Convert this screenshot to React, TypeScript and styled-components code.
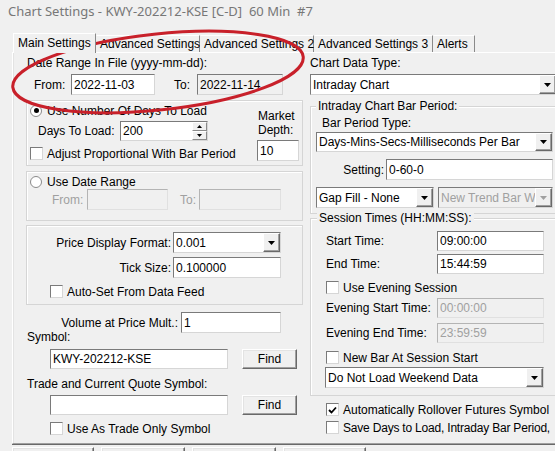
import React from "react";
import styled, { createGlobalStyle } from "styled-components";

const FACE = "#f0f0f0";
const DISABLED_TEXT = "#a0a0a0";

const GlobalStyle = createGlobalStyle`
  html, body { margin: 0; padding: 0; background: ${FACE}; }
  body {
    font-family: "Liberation Sans", Arial, sans-serif;
    font-size: 12px;
    color: #000;
  }
  *, *::before, *::after { box-sizing: border-box; }
`;

const Window = styled.div`
  position: relative;
  width: 555px;
  height: 451px;
  overflow: hidden;
  background: ${FACE};
`;

const TitleBar = styled.div`
  height: 22px;
  padding-left: 8px;
  font-family: "Noto Sans", "Open Sans", sans-serif;
  font-size: 13px;
  line-height: 22px;
  color: #777;
  white-space: pre;
`;

const Body = styled.div`
  padding: 11px 0 0 12px;
`;

const TabStrip = styled.div`
  display: flex;
  align-items: flex-end;
  height: 19px;
  padding-left: 1px;
`;

const Tab = styled.div<{ $w: number; $active?: boolean }>`
  position: relative;
  z-index: ${(p) => (p.$active ? 1 : 0)};
  flex: none;
  width: ${(p) => p.$w}px;
  height: ${(p) => (p.$active ? 20 : 17)}px;
  margin-bottom: ${(p) => (p.$active ? -1 : 0)}px;
  padding: ${(p) => (p.$active ? "2px 0 0 4px" : "1px 0 0 3px")};
  border-left: 1px solid ${(p) => (p.$active ? "#fff" : "transparent")};
  border-top: 1px solid #fff;
  border-right: 1px solid #8a8a8a;
  background: ${FACE};
  line-height: 14px;
  white-space: nowrap;
`;

const Panel = styled.div`
  width: 560px;
  height: 392px;
  border-top: 1px solid #fff;
  border-left: 1px solid #fff;
  border-bottom: 1px solid #a0a0a0;
  box-shadow: 0 1px 0 #696969, inset 1px 0 0 #e3e3e3;
  display: grid;
  grid-template-columns: 277px 250px;
  column-gap: 7px;
  align-items: start;
  padding-left: 13px;
`;

const Stack = styled.div<{ $w?: number; $mt?: number; $mr?: number; $pt?: number; $pl?: number }>`
  display: flex;
  flex-direction: column;
  flex: ${(p) => (p.$w ? "none" : "1")};
  ${(p) => (p.$w ? `width: ${p.$w}px;` : "")}
  margin-top: ${(p) => p.$mt ?? 0}px;
  margin-right: ${(p) => p.$mr ?? 0}px;
  padding-top: ${(p) => p.$pt ?? 0}px;
  padding-left: ${(p) => p.$pl ?? 0}px;
`;

const Caption = styled.div<{ $mt?: number; $pl?: number; $disabled?: boolean }>`
  height: 14px;
  margin-top: ${(p) => p.$mt ?? 0}px;
  padding-left: ${(p) => p.$pl ?? 0}px;
  line-height: 14px;
  white-space: nowrap;
  color: ${(p) => (p.$disabled ? DISABLED_TEXT : "inherit")};
`;

const Row = styled.div<{ $h: number; $mt?: number; $pl?: number }>`
  display: flex;
  align-items: center;
  height: ${(p) => p.$h}px;
  margin-top: ${(p) => p.$mt ?? 0}px;
  padding-left: ${(p) => p.$pl ?? 0}px;
  white-space: nowrap;
`;

const Label = styled.span<{
  $w?: number;
  $ml?: number;
  $pr?: number;
  $right?: boolean;
  $disabled?: boolean;
  $tight?: boolean;
}>`
  flex: none;
  ${(p) => (p.$w != null ? `width: ${p.$w}px;` : "")}
  margin-left: ${(p) => p.$ml ?? 0}px;
  padding-right: ${(p) => p.$pr ?? 0}px;
  text-align: ${(p) => (p.$right ? "right" : "left")};
  letter-spacing: ${(p) => (p.$tight ? "-0.2px" : "normal")};
  line-height: 14px;
  white-space: nowrap;
  color: ${(p) => (p.$disabled ? DISABLED_TEXT : "inherit")};
`;

/* sunken edit field */
const TextBox = styled.input.attrs({ type: "text", readOnly: true })<{
  $w: number;
  $h?: number;
  $ml?: number;
  $mt?: number;
  $disabled?: boolean;
  $gray?: boolean;
}>`
  flex: none;
  width: ${(p) => p.$w}px;
  height: ${(p) => (p.$h ? `${p.$h}px` : "100%")};
  margin: ${(p) => p.$mt ?? 0}px 0 0 ${(p) => p.$ml ?? 0}px;
  padding: 0 0 0 2px;
  border: 1px solid;
  border-color: ${(p) => (p.$disabled ? "#b4b4b4 #e0e0e0 #e0e0e0 #b4b4b4" : "#7a7a7a #d6d6d6 #d6d6d6 #7a7a7a")};
  background: ${(p) => (p.$disabled || p.$gray ? FACE : "#fff")};
  color: ${(p) => (p.$disabled ? DISABLED_TEXT : "#000")};
  font: inherit;
  outline: none;
`;

const Combo = styled.div<{ $w: number; $ml?: number; $disabled?: boolean }>`
  flex: none;
  display: flex;
  width: ${(p) => p.$w}px;
  height: 100%;
  margin-left: ${(p) => p.$ml ?? 0}px;
  border: 1px solid;
  border-color: #7a7a7a #d6d6d6 #d6d6d6 #7a7a7a;
  background: ${(p) => (p.$disabled ? FACE : "#fff")};
  color: ${(p) => (p.$disabled ? DISABLED_TEXT : "#000")};
`;

const ComboValue = styled.span`
  flex: 1;
  min-width: 0;
  display: flex;
  align-items: center;
  padding-left: 2px;
  overflow: hidden;
  white-space: nowrap;
`;

const DropButton = styled.span`
  flex: none;
  width: 17px;
  display: flex;
  align-items: center;
  justify-content: center;
  background: ${FACE};
  border: 1px solid;
  border-color: #fff #696969 #696969 #fff;
  box-shadow: inset -1px -1px 0 #a0a0a0;
`;

const SpinBox = styled.div<{ $w: number }>`
  flex: none;
  display: flex;
  width: ${(p) => p.$w}px;
  height: 100%;
  border: 1px solid;
  border-color: #7a7a7a #d6d6d6 #d6d6d6 #7a7a7a;
  background: #fff;
`;

const SpinButtons = styled.span`
  flex: none;
  width: 15px;
  display: flex;
  flex-direction: column;
`;

const SpinButton = styled.span`
  flex: 1;
  display: flex;
  align-items: center;
  justify-content: center;
  background: ${FACE};
  border: 1px solid;
  border-color: #fff #8a8a8a #8a8a8a #fff;
`;

const PushButton = styled.button<{ $w: number; $h: number; $ml?: number }>`
  flex: none;
  width: ${(p) => p.$w}px;
  height: ${(p) => p.$h}px;
  margin: 0 0 0 ${(p) => p.$ml ?? 0}px;
  padding: 0;
  border: 1px solid;
  border-color: #fff #696969 #696969 #fff;
  box-shadow: inset -1px -1px 0 #a0a0a0, inset 1px 1px 0 #e3e3e3;
  background: ${FACE};
  color: #000;
  font: inherit;
  line-height: 14px;
`;

const Check = styled.span<{ $checked?: boolean }>`
  flex: none;
  width: 13px;
  height: 13px;
  margin-right: 4px;
  display: inline-flex;
  align-items: center;
  justify-content: center;
  border: 1px solid;
  border-color: #7a7a7a #d6d6d6 #d6d6d6 #7a7a7a;
  background: #fff;
`;

const Radio = styled.span<{ $checked?: boolean }>`
  flex: none;
  width: 12px;
  height: 12px;
  margin-right: 5px;
  display: inline-flex;
  align-items: center;
  justify-content: center;
  border-radius: 50%;
  border: 1px solid #8a8a8a;
  background: #fff;
  &::after {
    content: "";
    display: ${(p) => (p.$checked ? "block" : "none")};
    width: 5px;
    height: 5px;
    border-radius: 50%;
    background: #000;
  }
`;

/* etched frame without caption */
const Group = styled.div<{ $h: number; $mt?: number; $row?: boolean; $pt?: number; $pl?: number }>`
  display: flex;
  flex-direction: ${(p) => (p.$row ? "row" : "column")};
  height: ${(p) => p.$h}px;
  margin-top: ${(p) => p.$mt ?? 0}px;
  padding-top: ${(p) => p.$pt ?? 0}px;
  padding-left: ${(p) => p.$pl ?? 0}px;
  border: 1px solid #d5d5d5;
  box-shadow: inset 1px 1px 0 #fff;
`;

/* etched frame with caption sitting on its top edge */
const TitledGroup = styled.div<{ $h: number; $mt?: number }>`
  display: flex;
  flex-direction: column;
  width: 252px;
  height: ${(p) => p.$h}px;
  margin-top: ${(p) => p.$mt ?? 0}px;
  border: 1px solid #d5d5d5;
  box-shadow: inset 1px 1px 0 #fff;
`;

const GroupTitle = styled.div<{ $ml: number }>`
  align-self: flex-start;
  height: 14px;
  margin: -8px 0 0 ${(p) => p.$ml}px;
  padding: 0 2px;
  background: ${FACE};
  line-height: 14px;
  white-space: nowrap;
`;

const ButtonBar = styled.div`
  display: flex;
  gap: 7px;
  margin-top: 3px;
`;

const Annotation = styled.svg`
  position: absolute;
  left: 0;
  top: 0;
  width: 555px;
  height: 451px;
  pointer-events: none;
`;

const DownArrow = ({ color = "#000" }: { color?: string }) => (
  <svg width="7" height="4" viewBox="0 0 7 4">
    <path d="M0 0H7L3.5 4Z" fill={color} />
  </svg>
);

const SmallArrow = ({ up }: { up?: boolean }) => (
  <svg width="5" height="3" viewBox="0 0 5 3">
    <path d={up ? "M0 3H5L2.5 0Z" : "M0 0H5L2.5 3Z"} fill="#000" />
  </svg>
);

const CheckMark = () => (
  <svg width="9" height="8" viewBox="0 0 9 8">
    <path d="M1 4L3.5 6.5L8 1.5" stroke="#000" strokeWidth="1.8" fill="none" />
  </svg>
);

const DropDown = ({ w, ml, value, disabled }: { w: number; ml?: number; value: string; disabled?: boolean }) => (
  <Combo $w={w} $ml={ml} $disabled={disabled}>
    <ComboValue>{value}</ComboValue>
    <DropButton>
      <DownArrow color={disabled ? DISABLED_TEXT : "#000"} />
    </DropButton>
  </Combo>
);

const CheckRow = ({
  mt,
  pl,
  checked,
  tight,
  children,
}: {
  mt?: number;
  pl?: number;
  checked?: boolean;
  tight?: boolean;
  children: React.ReactNode;
}) => (
  <Row $h={15} $mt={mt} $pl={pl}>
    <Check $checked={checked}>{checked && <CheckMark />}</Check>
    <Label $tight={tight}>{children}</Label>
  </Row>
);

const tabs = [
  { label: "Main Settings", w: 83, active: true },
  { label: "Advanced Settings", w: 104 },
  { label: "Advanced Settings 2", w: 114 },
  { label: "Advanced Settings 3", w: 119 },
  { label: "Alerts", w: 42 },
];

export default function App() {
  return (
    <Window>
      <GlobalStyle />
      <TitleBar>{"Chart Settings - KWY-202212-KSE [C-D]  60 Min  #7"}</TitleBar>
      <Body>
        <TabStrip>
          {tabs.map((t) => (
            <Tab key={t.label} $w={t.w} $active={t.active}>
              {t.label}
            </Tab>
          ))}
        </TabStrip>
        <Panel>
          {/* left column */}
          <Stack>
            <Caption $mt={3} $pl={1}>Date Range In File (yyyy-mm-dd):</Caption>
            <Row $h={21} $mt={4} $pl={8}>
              <Label $w={37}>From:</Label>
              <TextBox $w={84} value="2022-11-03" />
              <Label $w={23} $ml={19}>To:</Label>
              <TextBox $w={86} $gray value="2022-11-14" />
            </Row>

            <Group $h={66} $mt={5} $row>
              <Stack $pt={2} $pl={3}>
                <Row $h={15}>
                  <Radio $checked />
                  <Label>Use Number Of Days To Load</Label>
                </Row>
                <Row $h={20} $mt={3} $pl={8}>
                  <Label $w={82}>Days To Load:</Label>
                  <SpinBox $w={88}>
                    <ComboValue>200</ComboValue>
                    <SpinButtons>
                      <SpinButton>
                        <SmallArrow up />
                      </SpinButton>
                      <SpinButton>
                        <SmallArrow />
                      </SpinButton>
                    </SpinButtons>
                  </SpinBox>
                </Row>
                <CheckRow mt={5}>Adjust Proportional With Bar Period</CheckRow>
              </Stack>
              <Stack $w={42} $mr={3} $pt={8}>
                <Caption $pl={1}>Market</Caption>
                <Caption $pl={1}>Depth:</Caption>
                <TextBox $w={42} $h={21} $mt={3} value="10" />
              </Stack>
            </Group>

            <Group $h={50} $mt={5} $pt={2} $pl={3}>
              <Row $h={15}>
                <Radio />
                <Label>Use Date Range</Label>
              </Row>
              <Row $h={21} $pl={22}>
                <Label $w={35} $disabled>From:</Label>
                <TextBox $w={81} $disabled value="" />
                <Label $w={19} $ml={12} $disabled>To:</Label>
                <TextBox $w={82} $disabled value="" />
              </Row>
            </Group>

            <Group $h={80} $mt={4} $pt={6}>
              <Row $h={21}>
                <Label $w={146} $pr={2} $right>Price Display Format:</Label>
                <DropDown w={108} value="0.001" />
              </Row>
              <Row $h={21} $mt={4}>
                <Label $w={146} $pr={2} $right>Tick Size:</Label>
                <TextBox $w={108} value="0.100000" />
              </Row>
              <CheckRow mt={6} pl={23}>Auto-Set From Data Feed</CheckRow>
            </Group>

            <Row $h={21} $mt={7}>
              <Label $w={155} $pr={3} $right>Volume at Price Mult.:</Label>
              <TextBox $w={100} value="1" />
            </Row>
            <Caption $mt={-3} $pl={1}>Symbol:</Caption>
            <Row $h={20} $mt={5} $pl={24}>
              <TextBox $w={178} value="KWY-202212-KSE" />
              <PushButton $w={55} $h={20} $ml={14}>Find</PushButton>
            </Row>
            <Caption $mt={8} $pl={1}>Trade and Current Quote Symbol:</Caption>
            <Row $h={20} $mt={4} $pl={24}>
              <TextBox $w={178} value="" />
              <PushButton $w={55} $h={20} $ml={14}>Find</PushButton>
            </Row>
            <CheckRow mt={6} pl={24}>Use As Trade Only Symbol</CheckRow>
          </Stack>

          {/* right column */}
          <Stack>
            <Caption $mt={3}>Chart Data Type:</Caption>
            <Row $h={21} $mt={4}>
              <DropDown w={247} value="Intraday Chart" />
            </Row>

            <TitledGroup $h={108} $mt={11}>
              <GroupTitle $ml={5}>Intraday Chart Bar Period:</GroupTitle>
              <Caption $mt={3} $pl={11}>Bar Period Type:</Caption>
              <Row $h={20} $mt={2} $pl={5}>
                <DropDown w={237} value="Days-Mins-Secs-Milliseconds Per Bar" />
              </Row>
              <Row $h={21} $mt={7}>
                <Label $w={75} $pr={2} $right>Setting:</Label>
                <TextBox $w={167} value="0-60-0" />
              </Row>
              <Row $h={21} $mt={7} $pl={5}>
                <DropDown w={118} value="Gap Fill - None" />
                <DropDown w={115} ml={4} value="New Trend Bar W" disabled />
              </Row>
            </TitledGroup>

            <TitledGroup $h={178} $mt={4}>
              <GroupTitle $ml={6}>Session Times (HH:MM:SS):</GroupTitle>
              <Row $h={20} $mt={6} $pl={15}>
                <Label $w={111}>Start Time:</Label>
                <TextBox $w={107} value="09:00:00" />
              </Row>
              <Row $h={20} $mt={3} $pl={15}>
                <Label $w={111}>End Time:</Label>
                <TextBox $w={107} value="15:44:59" />
              </Row>
              <CheckRow mt={6} pl={15}>Use Evening Session</CheckRow>
              <Row $h={20} $mt={3} $pl={15}>
                <Label $w={111}>Evening Start Time:</Label>
                <TextBox $w={107} $disabled value="00:00:00" />
              </Row>
              <Row $h={20} $mt={5} $pl={15}>
                <Label $w={111}>Evening End Time:</Label>
                <TextBox $w={107} $disabled value="23:59:59" />
              </Row>
              <CheckRow mt={7} pl={15}>New Bar At Session Start</CheckRow>
              <Row $h={21} $mt={2} $pl={14}>
                <DropDown w={219} value="Do Not Load Weekend Data" />
              </Row>
            </TitledGroup>

            <CheckRow mt={6} pl={16} checked>Automatically Rollover Futures Symbol</CheckRow>
            <CheckRow mt={3} pl={16} tight>Save Days to Load, Intraday Bar Period,</CheckRow>
          </Stack>
        </Panel>
        {/* dialog command buttons, only their top edges are in view */}
        <ButtonBar>
          <PushButton $w={82} $h={24} aria-label="OK" />
          <PushButton $w={84} $h={24} aria-label="Cancel" />
          <PushButton $w={84} $h={24} aria-label="Apply" />
          <PushButton $w={83} $h={24} aria-label="Help" />
        </ButtonBar>
      </Body>

      <Annotation viewBox="0 0 555 451">
        <ellipse
          cx="158"
          cy="72"
          rx="146"
          ry="38"
          transform="rotate(-6 158 72)"
          fill="none"
          stroke="#c8202a"
          strokeWidth="3"
        />
      </Annotation>
    </Window>
  );
}
